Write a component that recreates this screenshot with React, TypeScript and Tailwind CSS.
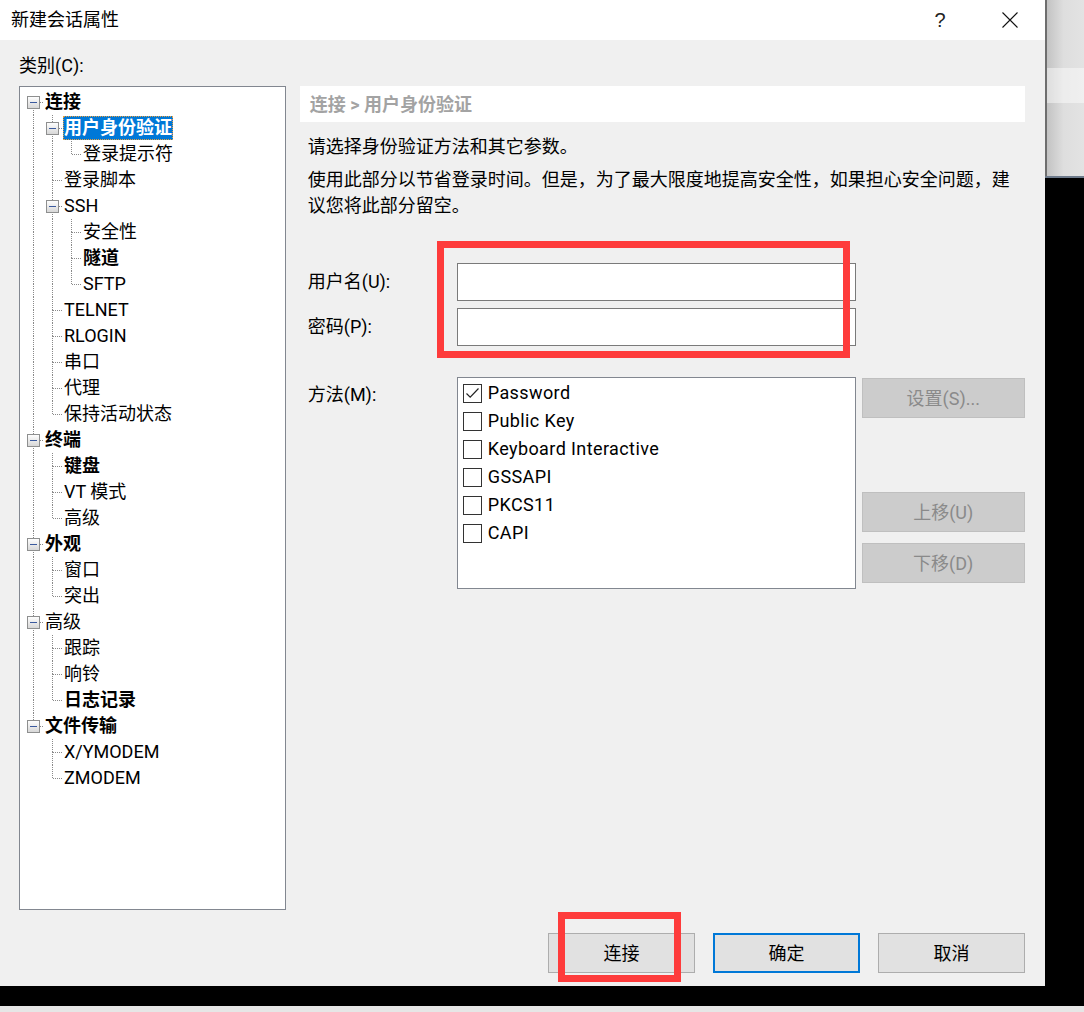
import React from "react";

type Node = {
  label: string;
  depth: number;
  bold?: boolean;
  exp?: boolean;
  next: boolean;
  selected?: boolean;
};

const tree: Node[] = [
  { label: "连接", depth: 0, bold: true, exp: true, next: true },
  { label: "用户身份验证", depth: 1, bold: true, exp: true, next: true, selected: true },
  { label: "登录提示符", depth: 2, next: false },
  { label: "登录脚本", depth: 1, next: true },
  { label: "SSH", depth: 1, exp: true, next: true },
  { label: "安全性", depth: 2, next: true },
  { label: "隧道", depth: 2, bold: true, next: true },
  { label: "SFTP", depth: 2, next: false },
  { label: "TELNET", depth: 1, next: true },
  { label: "RLOGIN", depth: 1, next: true },
  { label: "串口", depth: 1, next: true },
  { label: "代理", depth: 1, next: true },
  { label: "保持活动状态", depth: 1, next: false },
  { label: "终端", depth: 0, bold: true, exp: true, next: true },
  { label: "键盘", depth: 1, bold: true, next: true },
  { label: "VT 模式", depth: 1, next: true },
  { label: "高级", depth: 1, next: false },
  { label: "外观", depth: 0, bold: true, exp: true, next: true },
  { label: "窗口", depth: 1, next: true },
  { label: "突出", depth: 1, next: false },
  { label: "高级", depth: 0, exp: true, next: true },
  { label: "跟踪", depth: 1, next: true },
  { label: "响铃", depth: 1, next: true },
  { label: "日志记录", depth: 1, bold: true, next: false },
  { label: "文件传输", depth: 0, bold: true, exp: true, next: false },
  { label: "X/YMODEM", depth: 1, next: true },
  { label: "ZMODEM", depth: 1, next: false },
];

const LINE = "#8a8a8a";

// one 19x26 guide cell of the tree
function Guide({
  top,
  bottom,
  branch,
  box,
}: {
  top?: boolean;
  bottom?: boolean;
  branch?: boolean;
  box?: boolean;
}) {
  return (
    <svg width="19" height="26" viewBox="0 0 19 26" className="shrink-0" shapeRendering="crispEdges">
      {top && <line x1="9.5" y1="0" x2="9.5" y2="13" stroke={LINE} strokeDasharray="1 1" />}
      {bottom && <line x1="9.5" y1="13" x2="9.5" y2="26" stroke={LINE} strokeDasharray="1 1" />}
      {branch && <line x1="10" y1="13.5" x2="19" y2="13.5" stroke={LINE} strokeDasharray="1 1" />}
      {box && (
        <>
          <defs>
            <linearGradient id="exp" x1="0" y1="0" x2="0" y2="1">
              <stop offset="0" stopColor="#ffffff" />
              <stop offset="1" stopColor="#d6d6d6" />
            </linearGradient>
          </defs>
          <rect x="3.5" y="7.5" width="12" height="12" fill="url(#exp)" stroke="#8e8f8f" />
          <line x1="6" y1="13.5" x2="13" y2="13.5" stroke="#3b5a9e" strokeWidth="1.4" />
        </>
      )}
    </svg>
  );
}

function Tree() {
  const stack: boolean[] = [];
  return (
    <div className="flex flex-col">
      {tree.map((n, i) => {
        stack[n.depth] = n.next;
        const ancestors = stack.slice(0, n.depth);
        return (
          <div key={i} className="flex h-[26px] items-center">
            {ancestors.map((has, a) => (
              <Guide key={a} top={has} bottom={has} />
            ))}
            {n.exp ? (
              <Guide top={n.depth > 0 || i > 0} bottom={n.next} branch box />
            ) : (
              <Guide top bottom={n.next} branch />
            )}
            {n.selected ? (
              <span className="ml-[1px] px-[1px] leading-[24px] bg-[#0078d7] text-white font-bold outline outline-1 outline-dotted outline-[#e8a040] -outline-offset-1">
                {n.label}
              </span>
            ) : (
              <span className={`ml-[2px] leading-[26px] ${n.bold ? "font-bold" : ""}`}>{n.label}</span>
            )}
          </div>
        );
      })}
    </div>
  );
}

const methods = ["Password", "Public Key", "Keyboard Interactive", "GSSAPI", "PKCS11", "CAPI"];

function Checkbox({ checked }: { checked?: boolean }) {
  return (
    <span className="w-[19px] h-[19px] shrink-0 border border-[#333333] bg-white flex items-center justify-center">
      {checked && (
        <svg width="17" height="17" viewBox="0 0 17 17">
          <path d="M2.5 8.5 L6.2 12.2 L14.5 3.5" fill="none" stroke="#222" strokeWidth="1.2" />
        </svg>
      )}
    </span>
  );
}

function SideButton({ children, className = "" }: { children: React.ReactNode; className?: string }) {
  return (
    <div
      className={`h-[40px] flex items-center justify-center bg-[#cccccc] border border-[#bfbfbf] text-[#8a8a8a] text-[18px] ${className}`}
    >
      {children}
    </div>
  );
}

function DialogButton({ children, primary }: { children: React.ReactNode; primary?: boolean }) {
  return (
    <div
      className={`w-[147px] h-[40px] flex items-center justify-center bg-[#e1e1e1] text-[18px] ${
        primary ? "border-2 border-[#0078d7]" : "border border-[#adadad]"
      }`}
    >
      {children}
    </div>
  );
}

export default function App() {
  return (
    <div className="w-[1084px] h-[1012px] bg-black flex flex-col overflow-hidden text-black font-['Roboto','Noto_Sans_CJK_SC',sans-serif] text-[18px]">
      <div className="flex h-[986px]">
        {/* dialog */}
        <div className="relative w-[1045px] h-[986px] flex flex-col bg-[#f0f0f0]">
          <div className="h-[40px] bg-white flex items-center">
            <span className="flex-1 pl-[11px] leading-[26px]">新建会话属性</span>
            <div className="w-[70px] h-[40px] flex items-center justify-center text-[20px] font-['Liberation_Sans',sans-serif] font-light text-[#222]">
              ?
            </div>
            <div className="w-[70px] h-[40px] flex items-center justify-center">
              <svg width="16" height="16" viewBox="0 0 16 16">
                <path d="M0.5 0.5 L15.5 15.5 M15.5 0.5 L0.5 15.5" stroke="#111" strokeWidth="1.1" />
              </svg>
            </div>
          </div>

          <div className="flex-1 flex flex-col pl-[19px] pr-[20px]">
            <div className="flex h-[870px]">
              <div className="w-[267px] flex flex-col">
                <div className="h-[46px] pt-[13px] leading-[26px]">类别(C):</div>
                <div className="h-[824px] border border-[#828790] bg-white pt-[2px] pl-[4px]">
                  <Tree />
                </div>
              </div>

              <div className="ml-[14px] w-[726px] flex flex-col">
                <div className="mt-[46px] h-[36px] bg-white flex items-center pl-[10px] font-bold text-[#a3a3a3]">
                  连接 &gt; 用户身份验证
                </div>
                <div className="pl-[8px] flex flex-col">
                  <p className="mt-[12px] leading-[26px]">请选择身份验证方法和其它参数。</p>
                  <p className="mt-[7px] leading-[26px] pr-[10px]">
                    使用此部分以节省登录时间。但是，为了最大限度地提高安全性，如果担心安全问题，建议您将此部分留空。
                  </p>

                  <div className="mt-[44px] flex items-center h-[38px]">
                    <span className="w-[149px] leading-[26px]">用户名(U):</span>
                    <div className="w-[399px] h-[38px] bg-white border border-[#7a7a7a]" />
                  </div>
                  <div className="mt-[7px] flex items-center h-[38px]">
                    <span className="w-[149px] leading-[26px]">密码(P):</span>
                    <div className="w-[399px] h-[38px] bg-white border border-[#7a7a7a]" />
                  </div>

                  <div className="mt-[31px] flex">
                    <span className="w-[149px] pt-[5px] leading-[26px]">方法(M):</span>
                    <div className="w-[399px] h-[212px] bg-white border border-[#828790] pt-[1px] pl-[5px] flex flex-col">
                      {methods.map((m, i) => (
                        <div key={m} className="h-[28px] flex items-center">
                          <Checkbox checked={i === 0} />
                          <span className="ml-[6px] leading-[26px] tracking-[0.4px]">{m}</span>
                        </div>
                      ))}
                    </div>
                    <div className="ml-[6px] w-[163px] flex flex-col">
                      <SideButton className="mt-[1px]">设置(S)...</SideButton>
                      <SideButton className="mt-[74px]">上移(U)</SideButton>
                      <SideButton className="mt-[11px]">下移(D)</SideButton>
                    </div>
                  </div>
                </div>
              </div>
            </div>

            <div className="mt-[23px] flex justify-end gap-[18px]">
              <DialogButton>连接</DialogButton>
              <DialogButton primary>确定</DialogButton>
              <DialogButton>取消</DialogButton>
            </div>
          </div>

          {/* red annotation boxes */}
          <div className="absolute left-[437px] top-[241px] w-[413px] h-[117px] border-[7px] border-[#fe3b3b]" />
          <div className="absolute left-[558px] top-[912px] w-[123px] h-[70px] border-[7px] border-[#fe3b3b]" />
        </div>

        {/* window behind the dialog */}
        <div className="flex-1 flex flex-col">
          <div className="h-[176px] flex">
            <div className="w-[2px] bg-[#6e6e6e]" />
            <div className="flex-1 flex flex-col bg-linear-to-r from-[#c3c3c3] via-[#dedede] via-45% to-[#e3e3e3]">
              <div className="h-[68px]" />
              <div className="h-[35px] bg-white/45" />
            </div>
          </div>
          <div className="h-[2px] bg-[#6d7a8b]" />
        </div>
      </div>
      <div className="h-[20px] bg-black" />
      <div className="h-[6px] bg-[#e6e6e6]" />
    </div>
  );
}
